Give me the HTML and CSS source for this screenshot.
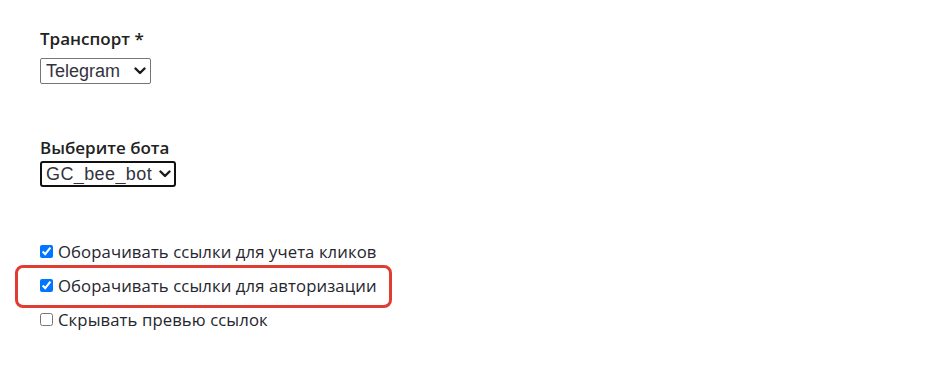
FILE: index.html
```html
<!DOCTYPE html>
<html lang="ru">
<head>
<meta charset="utf-8">
<link rel="stylesheet" href="styles.css">
</head>
<body>
<form class="form">
  <div class="field">
    <label class="field-label" for="transport">Транспорт *</label>
    <div class="select-wrap select-transport">
      <select id="transport" class="select">
        <option>Telegram</option>
      </select>
      <svg class="chevron" width="12" height="8" viewBox="0 0 12 8" aria-hidden="true"><path d="M1.5 1.5 L6 6 L10.5 1.5" fill="none" stroke="#1a1a1a" stroke-width="2.4" stroke-linecap="round" stroke-linejoin="round"/></svg>
    </div>
  </div>
  <div class="field field-bot">
    <label class="field-label" for="bot">Выберите бота</label>
    <div class="select-wrap select-bot">
      <select id="bot" class="select">
        <option>GC_bee_bot</option>
      </select>
      <svg class="chevron" width="12" height="8" viewBox="0 0 12 8" aria-hidden="true"><path d="M1.5 1.5 L6 6 L10.5 1.5" fill="none" stroke="#1a1a1a" stroke-width="2.4" stroke-linecap="round" stroke-linejoin="round"/></svg>
    </div>
  </div>
  <div class="checks">
    <label class="check"><input type="checkbox" checked><span>Оборачивать ссылки для учета кликов</span></label>
    <label class="check check-highlight"><input type="checkbox" checked><span>Оборачивать ссылки для авторизации</span></label>
    <label class="check"><input type="checkbox"><span>Скрывать превью ссылок</span></label>
  </div>
</form>
</body>
</html>
```

FILE: styles.css
```css
html, body {
  margin: 0;
  padding: 0;
  background: #ffffff;
}
body {
  font-family: "Open Sans", "Noto Sans", sans-serif;
  color: #26262e;
  font-size: 17px;
}
.form {
  padding: 27px 0 0 40px;
  display: flex;
  flex-direction: column;
}
.field {
  display: flex;
  flex-direction: column;
  align-items: flex-start;
}
.field-bot {
  margin-top: 52px;
}
.field-label {
  font-weight: 600;
  font-size: 17px;
  line-height: 24px;
  margin-bottom: 7px;
  color: #222;
}
.field-bot .field-label {
  margin-bottom: 1px;
}
.select-wrap {
  position: relative;
  display: flex;
}
.select {
  -webkit-appearance: none;
  appearance: none;
  font-family: "Liberation Sans", Arial, sans-serif;
  font-size: 18px;
  color: #33333d;
  width: 100%;
  height: 26px;
  padding: 0 0 0 5px;
  border: 1px solid #767676;
  border-radius: 2px;
  background: #fff;
  outline: none;
  box-sizing: border-box;
}
.select-transport {
  width: 111px;
}
.select-bot {
  width: 136px;
}
.select-bot .select {
  border: 2px solid #101010;
  border-radius: 3px;
  padding-left: 4px;
  height: 26px;
  letter-spacing: 0.4px;
}
.chevron {
  position: absolute;
  right: 5px;
  top: 9px;
}
.checks {
  margin-top: 47px;
  display: flex;
  flex-direction: column;
}
.check {
  display: flex;
  align-items: center;
  height: 34px;
  font-size: 16.7px;
  letter-spacing: 0.1px;
}
.check input {
  margin: 0 5px 0 0;
  width: 13px;
  height: 13px;
}
.check-highlight {
  position: relative;
}
.check-highlight::before {
  content: "";
  position: absolute;
  left: -25px;
  top: -3px;
  width: 377px;
  height: 43px;
  box-sizing: border-box;
  border: 3px solid #e13c32;
  border-radius: 8px;
}
```
